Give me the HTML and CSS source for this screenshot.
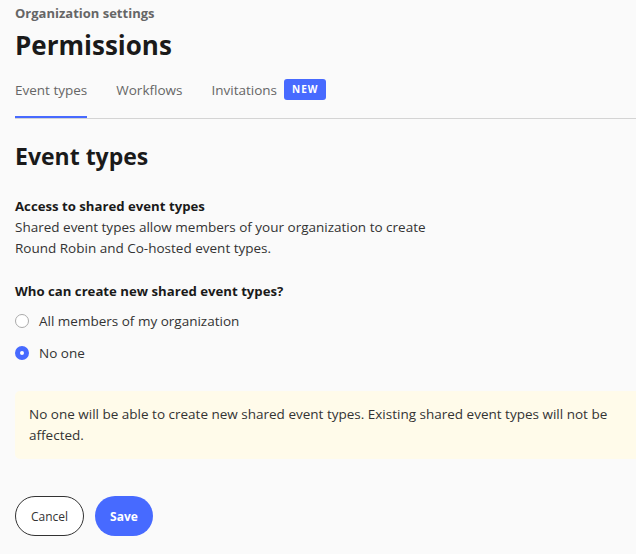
FILE: index.html
```html
<!DOCTYPE html>
<html lang="en">
<head>
    <meta charset="UTF-8">
    <meta name="viewport" content="width=device-width, initial-scale=1.0">
    <title>Permissions</title>
    <link rel="stylesheet" href="styles.css">
</head>
<body>
    <div class="page">
        <div class="header">
            <div class="eyebrow">Organization settings</div>
            <h1>Permissions</h1>
            <div class="tabs">
                <a class="tab active">Event types</a>
                <a class="tab">Workflows</a>
                <a class="tab">Invitations <span class="badge">NEW</span></a>
            </div>
        </div>

        <div class="content">
            <h2>Event types</h2>

            <div class="section">
                <div class="label">Access to shared event types</div>
                <p class="desc">Shared event types allow members of your organization to create<br>Round Robin and Co-hosted event types.</p>
            </div>

            <div class="section section-radios">
                <div class="label">Who can create new shared event types?</div>
                <label class="radio">
                    <input type="radio" name="who" value="all">
                    <span class="dot"></span>
                    All members of my organization
                </label>
                <label class="radio">
                    <input type="radio" name="who" value="none" checked>
                    <span class="dot"></span>
                    No one
                </label>
            </div>

            <div class="notice">No one will be able to create new shared event types. Existing shared event types will not be affected.</div>

            <div class="actions">
                <button type="button" class="btn btn-outline">Cancel</button>
                <button type="button" class="btn btn-primary">Save</button>
            </div>
        </div>
    </div>
</body>
</html>
```

FILE: styles.css
```css
body {
    margin: 0;
    background-color: #fafafa;
    font-family: "Open Sans", "Liberation Sans", sans-serif;
    color: #1a1a1a;
}
.page {
    padding: 0 0 0 15px;
}
.eyebrow {
    font-size: 13px;
    font-weight: 700;
    color: #666;
    line-height: 18px;
    padding-top: 4px;
}
h1 {
    margin: 6px 0 0;
    font-size: 26px;
    line-height: 34px;
    font-weight: 700;
}
.tabs {
    display: flex;
    gap: 29px;
    border-bottom: 1px solid #d4d4d4;
}
.tab {
    display: flex;
    align-items: center;
    gap: 7px;
    font-size: 13.5px;
    line-height: 20px;
    color: #666;
    padding: 17px 0 16px;
    border-bottom: 2px solid transparent;
}
.tab.active {
    border-bottom-color: #476aff;
}
.badge {
    background-color: #476aff;
    color: #fff;
    font-size: 10px;
    font-weight: 700;
    letter-spacing: 1px;
    padding: 0 8px;
    height: 21px;
    line-height: 21px;
    border-radius: 3px;
}
h2 {
    margin: 23px 0 0;
    font-size: 23px;
    line-height: 28px;
    font-weight: 700;
}
.section {
    margin-top: 26px;
}
.section-radios {
    margin-top: 22px;
}
.label {
    font-size: 13.2px;
    font-weight: 700;
    line-height: 21px;
}
.desc {
    margin: 0;
    font-size: 13.5px;
    line-height: 21px;
    color: #333;
}
.radio {
    display: flex;
    align-items: center;
    gap: 10px;
    font-size: 13.5px;
    color: #333;
    height: 32px;
}
.section .label + .radio {
    margin-top: 3px;
}
.radio input {
    display: none;
}
.dot {
    width: 12px;
    height: 12px;
    border: 1px solid #aaa;
    border-radius: 50%;
    background: #fff;
    box-sizing: content-box;
}
.radio input:checked + .dot {
    width: 4px;
    height: 4px;
    border: 5px solid #476aff;
}
.notice {
    margin-top: 22px;
    background-color: #fffbea;
    border-radius: 5px 0 0 5px;
    padding: 13px 14px;
    font-size: 13.5px;
    line-height: 21px;
    color: #333;
}
.actions {
    display: flex;
    gap: 11px;
    margin-top: 37px;
}
.btn {
    height: 40px;
    border-radius: 20px;
    font-family: inherit;
    font-size: 12px;
    cursor: pointer;
}
.btn-outline {
    background: #fff;
    border: 1px solid #333;
    color: #333;
    padding: 0 15px;
}
.btn-primary {
    background-color: #476aff;
    border: none;
    color: #fff;
    font-weight: 700;
    padding: 0 15px;
}
```
